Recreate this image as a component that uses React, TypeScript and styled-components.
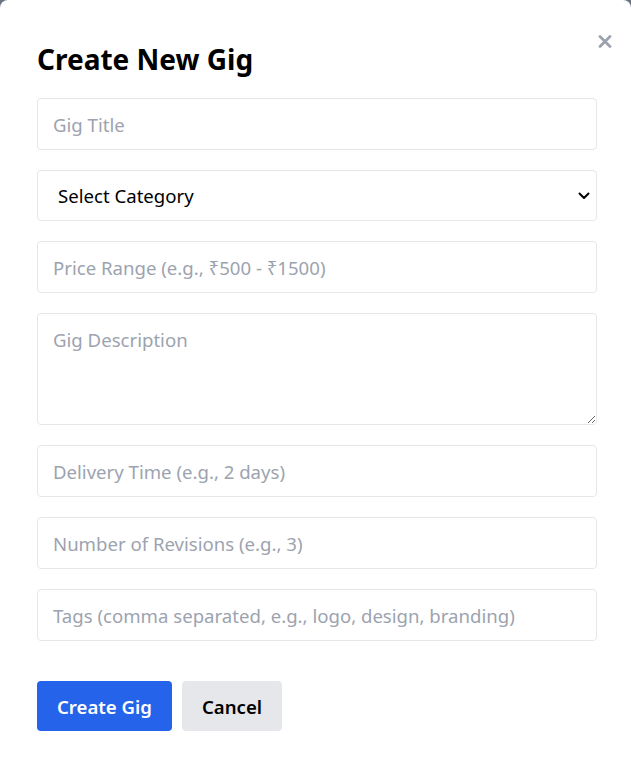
import React from "react";
import styled, { createGlobalStyle } from "styled-components";

const Global = createGlobalStyle`
  html, body { margin: 0; padding: 0; background: #6b7280; overflow: hidden; }
  body { font-family: "Noto Sans", "Open Sans", sans-serif; }
  * { box-sizing: border-box; }
`;

const Modal = styled.div`
  position: relative;
  background: #ffffff;
  border-radius: 8px;
  width: 631px;
  min-height: 800px;
  padding: 41px 34px 40px 37px;
`;

const CloseButton = styled.button`
  position: absolute;
  top: 35px;
  right: 19px;
  width: 14px;
  height: 13px;
  padding: 0;
  border: none;
  background: none;
  color: #9ca3af;
  cursor: pointer;
  display: flex;
`;

const Title = styled.h2`
  margin: 0 0 21px;
  font-size: 28px;
  line-height: 36px;
  font-weight: 700;
  color: #000;
`;

const Form = styled.form`
  display: flex;
  flex-direction: column;
  gap: 20px;
`;

const fieldBase = `
  width: 100%;
  border: 1px solid #e5e7eb;
  border-radius: 4px;
  background: #fff;
  font-family: "Noto Sans", "Open Sans", sans-serif;
  font-size: 18.6px;
  color: #111827;
  outline: none;
  &::placeholder { color: #9ca3af; opacity: 1; }
`;

const Input = styled.input`
  ${fieldBase}
  height: 52px;
  padding: 0 15px;
`;

const TextArea = styled.textarea`
  ${fieldBase}
  height: 112px;
  padding: 13px 15px;
  line-height: 26px;
  display: block;
  resize: vertical;
`;

const SelectWrap = styled.div`
  position: relative;
`;

const Select = styled.select`
  ${fieldBase}
  appearance: none;
  -webkit-appearance: none;
  height: 51px;
  padding: 0 40px 0 20px;
  color: #000;
`;

const Chevron = styled.svg`
  position: absolute;
  right: 7px;
  top: 22px;
  pointer-events: none;
`;

const Actions = styled.div`
  display: flex;
  gap: 10px;
  margin-top: 20px;
`;

const Button = styled.button<{ $primary?: boolean }>`
  height: 50px;
  padding: 0 20px;
  border: none;
  border-radius: 4px;
  font-family: "Noto Sans", "Open Sans", sans-serif;
  font-size: 18.6px;
  font-weight: 600;
  cursor: pointer;
  background: ${(p) => (p.$primary ? "#2563eb" : "#e5e7eb")};
  color: ${(p) => (p.$primary ? "#ffffff" : "#000000")};
`;

export default function App() {
  return (
    <>
      <Global />
      <Modal>
        <CloseButton aria-label="Close">
          <svg width="14" height="13" viewBox="0 0 14 13">
            <path d="M2 1.5 L12 11.5 M12 1.5 L2 11.5" stroke="currentColor" strokeWidth="2.8" strokeLinecap="round" />
          </svg>
        </CloseButton>
        <Title>Create New Gig</Title>
        <Form onSubmit={(e) => e.preventDefault()}>
          <Input placeholder="Gig Title" />
          <SelectWrap>
            <Select defaultValue="">
              <option value="">Select Category</option>
              <option value="design">Design</option>
              <option value="writing">Writing</option>
            </Select>
            <Chevron width="12" height="8" viewBox="0 0 12 8">
              <path d="M1.5 1.5 L6 6 L10.5 1.5" fill="none" stroke="#000" strokeWidth="2" strokeLinecap="round" strokeLinejoin="round" />
            </Chevron>
          </SelectWrap>
          <Input placeholder="Price Range (e.g., ₹500 - ₹1500)" />
          <TextArea placeholder="Gig Description" />
          <Input placeholder="Delivery Time (e.g., 2 days)" />
          <Input placeholder="Number of Revisions (e.g., 3)" />
          <Input placeholder="Tags (comma separated, e.g., logo, design, branding)" />
          <Actions>
            <Button type="submit" $primary>Create Gig</Button>
            <Button type="button">Cancel</Button>
          </Actions>
        </Form>
      </Modal>
    </>
  );
}
